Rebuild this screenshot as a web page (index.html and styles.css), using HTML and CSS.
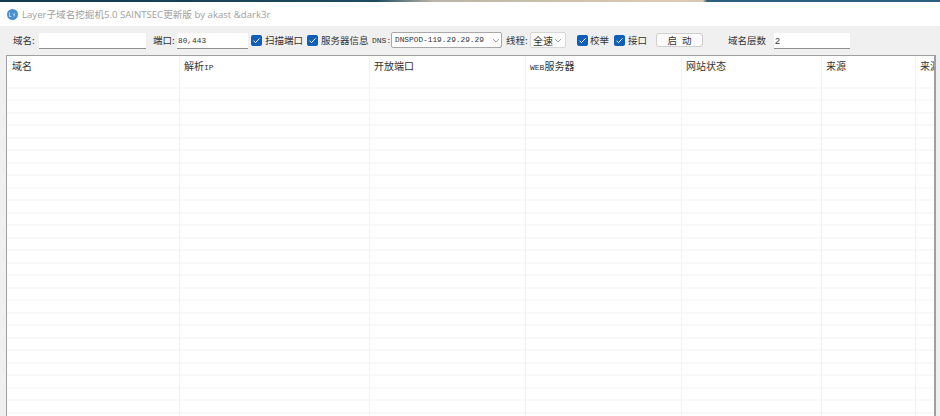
FILE: index.html
```html
<html>

<head>
    <meta charset="utf-8">
    <link rel="stylesheet" href="styles.css">
</head>

<body>
    <div class="strip"></div>
    <div class="titlebar">
        <svg class="appicon" width="11" height="11" viewBox="0 0 11 11">
            <circle cx="5.5" cy="5.5" r="5.5" fill="#4a8fd0" />
            <path d="M2.5 3.5v4h2M6 4.5l1 1.5 1-1.5M7 6v1.5" fill="none" stroke="#dcebf8" stroke-width="0.8" />
        </svg>
        <span>Layer子域名挖掘机5.0 SAINTSEC更新版 by akast &amp;dark3r</span>
    </div>
    <div class="toolbar">
        <label class="lbl lbl-domain">域名:</label>
        <input class="field field-domain" type="text">
        <label class="lbl lbl-port">端口:</label>
        <input class="field field-port mono" type="text" value="80,443">
        <span class="check check-scan"><svg width="11" height="11" viewBox="0 0 11 11"><path d="M2.5 5.7l2 2 4-4.4" /></svg></span>
        <label class="lbl lbl-scan">扫描端口</label>
        <span class="check check-server"><svg width="11" height="11" viewBox="0 0 11 11"><path d="M2.5 5.7l2 2 4-4.4" /></svg></span>
        <label class="lbl lbl-server">服务器信息</label>
        <label class="lbl lbl-dns mono">DNS:</label>
        <div class="select select-dns mono">DNSPOD-119.29.29.29<svg width="8" height="5" viewBox="0 0 8 5"><path d="M1 1l3 3 3-3" /></svg></div>
        <label class="lbl lbl-thread">线程:</label>
        <div class="select select-thread">全速<svg width="8" height="5" viewBox="0 0 8 5"><path d="M1 1l3 3 3-3" /></svg></div>
        <span class="check check-verify"><svg width="11" height="11" viewBox="0 0 11 11"><path d="M2.5 5.7l2 2 4-4.4" /></svg></span>
        <label class="lbl lbl-verify">校举</label>
        <span class="check check-api"><svg width="11" height="11" viewBox="0 0 11 11"><path d="M2.5 5.7l2 2 4-4.4" /></svg></span>
        <label class="lbl lbl-api">接口</label>
        <button class="btn" type="button">启 动</button>
        <label class="lbl lbl-depth">域名层数</label>
        <input class="field field-depth" type="text" value="2">
    </div>
    <div id="tb">
        <div class="col col-1"><div class="th">域名</div></div>
        <div class="col col-2"><div class="th">解析<span class="mono">IP</span></div></div>
        <div class="col col-3"><div class="th">开放端口</div></div>
        <div class="col col-4"><div class="th"><span class="mono">WEB</span>服务器</div></div>
        <div class="col col-5"><div class="th">网站状态</div></div>
        <div class="col col-6"><div class="th">来源</div></div>
        <div class="col col-7"><div class="th">来源</div></div>
    </div>
</body>

</html>
```

FILE: styles.css
```css
html,
body {
    margin: 0;
    height: 416px;
    overflow: hidden;
}

body {
    font-family: "Noto Sans CJK SC", sans-serif;
    font-size: 9.5px;
    color: #333;
    background: #f0f0f0;
}

.mono {
    font-family: "Liberation Mono", "Noto Sans CJK SC", monospace;
}

.strip {
    height: 2px;
    background: linear-gradient(90deg, #123a4e 0, #1d4a63 40%, #b9b4a8 46%, #dcc9b0 70%, #d8c8b0 703px, #2c6080 707px, #2c6080 100%);
}

.titlebar {
    height: 24px;
    background: #fff;
    display: flex;
    align-items: center;
    padding-left: 7px;
    gap: 4px;
    font-family: "Open Sans", "Noto Sans CJK SC", sans-serif;
    font-size: 9.6px;
    color: #a0a0a0;
}

.toolbar {
    height: 29px;
    display: flex;
    align-items: center;
    box-sizing: border-box;
    padding: 0 0 1px 13px;
}

.lbl {
    flex: none;
    white-space: nowrap;
}

.lbl-domain { width: 26px; }
.lbl-port { width: 24px; margin-left: 7px; }
.lbl-scan { width: 38px; margin-left: 3px; }
.lbl-server { width: 49px; margin-left: 3px; }
.lbl-dns { width: 18px; margin-left: 2px; font-size: 8px; }
.lbl-thread { width: 24px; margin-left: 4px; }
.lbl-verify { width: 20px; margin-left: 2px; }
.lbl-api { width: 20px; margin-left: 3px; }
.lbl-depth { width: 38px; margin-left: 25px; }

.field {
    flex: none;
    height: 16px;
    margin-top: 2px;
    box-sizing: border-box;
    padding: 0 2px 0 1px;
    border: 0;
    border-bottom: 1px solid #8f8f8f;
    background: #fff;
    font-size: 7.8px;
    color: #333;
    outline: none;
}

.field-domain { width: 107px; }
.field-port { width: 71px; }
.field-depth { width: 76px; margin-left: 8px; font-family: "Liberation Sans", sans-serif; font-size: 9px; }

.check {
    width: 11px;
    height: 11px;
    border-radius: 2px;
    background: #0f5fb8;
    display: block;
    flex: none;
}

.check svg {
    display: block;
    fill: none;
    stroke: #fff;
    stroke-width: 1;
}

.check-scan { margin-left: 3px; }
.check-server { margin-left: 4px; }
.check-verify { margin-left: 11px; }
.check-api { margin-left: 4px; }

.select {
    flex: none;
    height: 16px;
    box-sizing: border-box;
    border: 1px solid #a8a8a8;
    border-radius: 2px;
    background: #fff;
    display: flex;
    align-items: center;
    justify-content: space-between;
    padding: 0 1px 0 3px;
    white-space: nowrap;
    font-size: 7.8px;
    color: #333;
}

.select svg {
    fill: none;
    stroke: #aaa;
    stroke-width: 1;
}

.select-dns { width: 111px; margin-left: 1px; }
.select-thread { width: 36px; padding: 0 3px 0 2px; border-color: #d8d8d8; font-size: 10px; }

.btn {
    flex: none;
    width: 47px;
    height: 14px;
    margin-left: 8px;
    margin-bottom: 1px;
    padding: 0;
    border: 1px solid #cfcfcf;
    border-radius: 3px;
    background: #fbfbfb;
    font-family: "Noto Sans CJK SC", sans-serif;
    font-size: 9.5px;
    line-height: 12px;
    word-spacing: 3px;
    color: #333;
}

#tb {
    height: 361px;
    margin: 0 4px 0 6px;
    box-sizing: border-box;
    border: 1px solid #a0a0a0;
    border-bottom: 0;
    border-right-width: 2px;
    display: flex;
    background: repeating-linear-gradient(180deg, #fff 0, #fff 11.5px, #f3f3f3 11.5px, #f3f3f3 12.5px) 0 19.5px #fff;
    overflow: hidden;
}

.col {
    flex: none;
    box-sizing: border-box;
    border-right: 1px solid #f2f2f2;
}

.col-1 { width: 173px; }
.col-2 { width: 190px; }
.col-3 { width: 156px; }
.col-4 { width: 156px; }
.col-5 { width: 140px; }
.col-6 { width: 94px; }
.col-7 { width: 21px; border-right: 0; }

.th {
    height: 20px;
    background: #fff;
    padding-left: 4px;
    line-height: 20px;
    white-space: nowrap;
    font-size: 10px;
}

.col-1 .th {
    padding-left: 5px;
}

.th .mono {
    font-size: 8px;
}
```
